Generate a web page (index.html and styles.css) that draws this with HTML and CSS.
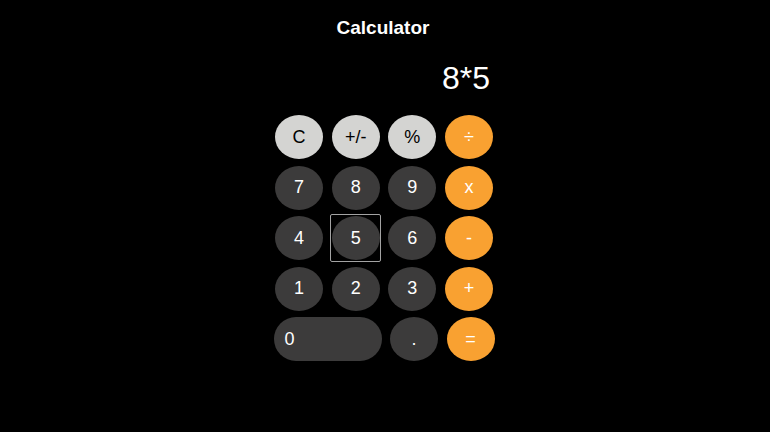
FILE: index.html
```html
<!DOCTYPE html>
<html lang="en">
<head>
<meta charset="utf-8">
<title>Calculator</title>
<link rel="stylesheet" href="styles.css">
</head>
<body>
  <main class="calc">
    <h1 class="title">Calculator</h1>
    <div class="display">8*5</div>
    <div class="keys">
      <div class="row">
        <button class="key light">C</button>
        <button class="key light">+/-</button>
        <button class="key light">%</button>
        <button class="key op">÷</button>
      </div>
      <div class="row">
        <button class="key dark">7</button>
        <button class="key dark">8</button>
        <button class="key dark">9</button>
        <button class="key op">x</button>
      </div>
      <div class="row">
        <button class="key dark">4</button>
        <button class="key dark focused">5</button>
        <button class="key dark">6</button>
        <button class="key op">-</button>
      </div>
      <div class="row">
        <button class="key dark">1</button>
        <button class="key dark">2</button>
        <button class="key dark">3</button>
        <button class="key op">+</button>
      </div>
      <div class="row last">
        <button class="key dark zero">0</button>
        <button class="key dark">.</button>
        <button class="key op">=</button>
      </div>
    </div>
  </main>
</body>
</html>
```

FILE: styles.css
```css
html, body {
  margin: 0;
  padding: 0;
  background: #000;
}

body {
  padding-right: 2px;
  font-family: "Liberation Sans", Arial, sans-serif;
  color: #fff;
}

.calc {
  width: 222px;
  margin: 0 auto;
  padding-top: 17px;
  display: flex;
  flex-direction: column;
  align-items: center;
}

.title {
  margin: 0 0 0 -2px;
  font-size: 19px;
  font-weight: bold;
  line-height: 22px;
  text-align: center;
}

.display {
  align-self: stretch;
  margin-top: 21px;
  padding-right: 5px;
  font-size: 32px;
  line-height: 37px;
  text-align: right;
}

.keys {
  margin-top: 18px;
  display: flex;
  flex-direction: column;
  gap: 6.5px;
  width: 218px;
}

.row {
  display: flex;
  justify-content: space-between;
}

.row.last {
  width: 221px;
  margin-left: -1.5px;
  justify-content: flex-start;
}

.row.last .key + .key {
  margin-left: 8.5px;
}

.key {
  position: relative;
  width: 48px;
  height: 44px;
  border: none;
  border-radius: 50%;
  padding: 0;
  font-family: "Liberation Sans", Arial, sans-serif;
  font-size: 18px;
  color: #fff;
  cursor: pointer;
}

.light {
  background: #d4d4d2;
  color: #000;
}

.dark {
  background: #3c3b3b;
}

.op {
  background: #f9a131;
}

.zero {
  width: 108px;
  border-radius: 22px;
  text-align: left;
  padding-left: 11px;
}

.focused::after {
  content: "";
  position: absolute;
  top: -2px;
  left: -2px;
  right: -1px;
  bottom: -2px;
  border: 1px solid #a3a3a3;
  border-radius: 2px;
}
```
